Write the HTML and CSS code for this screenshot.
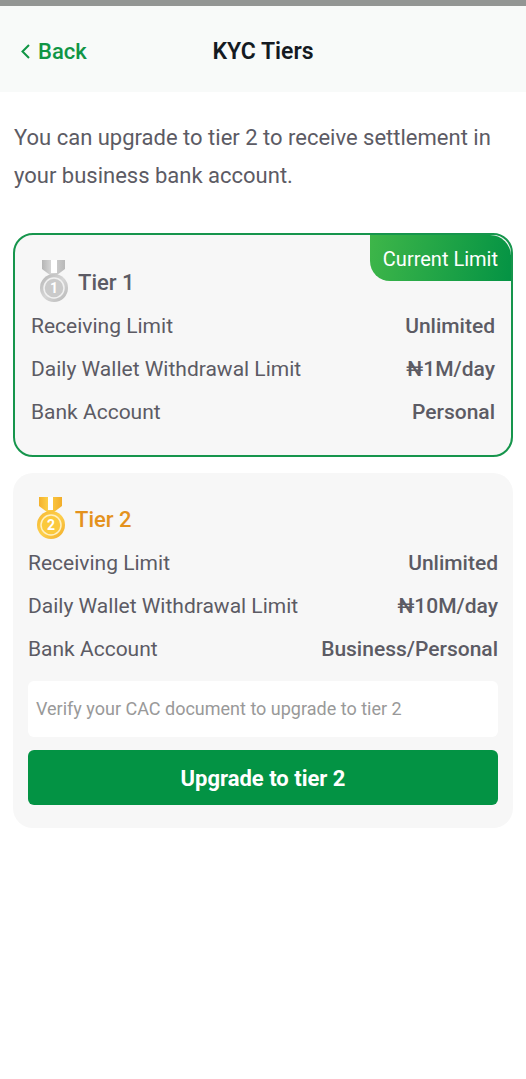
FILE: index.html
```html
<!DOCTYPE html>
<html lang="en">
<head>
<meta charset="utf-8">
<meta name="viewport" content="width=device-width, initial-scale=1">
<title>KYC Tiers</title>
<link rel="stylesheet" href="styles.css">
</head>
<body>
<header class="header">
  <a class="back" href="#">
    <svg class="back-icon" viewBox="0 0 10 16" aria-hidden="true"><path d="M9 1 2.500 7.500 9 14" fill="none" stroke="currentColor" stroke-width="2"/></svg>
    Back
  </a>
  <h1 class="page-title">KYC Tiers</h1>
</header>
<main class="content">
  <p class="intro">You can upgrade to tier 2 to receive settlement in your business bank account.</p>

  <section class="card card-current">
    <span class="badge">Current Limit</span>
    <div class="tier-head">
      <svg class="medal" viewBox="0 0 30 42" aria-hidden="true">
        <defs>
          <linearGradient id="silver" x1="0" y1="0" x2="1" y2="1"><stop offset="0" stop-color="#b4b4b4"/><stop offset=".5" stop-color="#d6d6d6"/><stop offset="1" stop-color="#b6b6b6"/></linearGradient>
          <linearGradient id="silver-ribbon"><stop offset="0" stop-color="#b5b5b5"/><stop offset=".4" stop-color="#d6d6d6"/><stop offset="1" stop-color="#b8b8b8"/></linearGradient>
        </defs>
        <path d="M3 0h23v9l-8 6h-7L3 9z" fill="url(#silver-ribbon)"/>
        <path d="M12 0h6v13h-6z" fill="#fff"/>
        <circle cx="15" cy="28" r="14" fill="url(#silver)"/>
        <circle cx="15" cy="28" r="10" fill="#cacaca" stroke="#f1f1f1" stroke-width="1.500"/>
        <text x="15" y="33" class="medal-number">1</text>
      </svg>
      <h2 class="tier-title">Tier 1</h2>
    </div>
    <dl class="limits">
      <div class="limit"><dt>Receiving Limit</dt><dd>Unlimited</dd></div>
      <div class="limit"><dt>Daily Wallet Withdrawal Limit</dt><dd>₦1M/day</dd></div>
      <div class="limit"><dt>Bank Account</dt><dd>Personal</dd></div>
    </dl>
  </section>

  <section class="card card-next">
    <div class="tier-head">
      <svg class="medal" viewBox="0 0 30 42" aria-hidden="true">
        <defs>
          <linearGradient id="gold" x1="0" y1="0" x2="1" y2="1"><stop offset="0" stop-color="#f5b730"/><stop offset=".5" stop-color="#fdcf4c"/><stop offset="1" stop-color="#f2ac28"/></linearGradient>
          <linearGradient id="gold-ribbon"><stop offset="0" stop-color="#f4b02b"/><stop offset=".4" stop-color="#fdd048"/><stop offset="1" stop-color="#f2ad2a"/></linearGradient>
        </defs>
        <path d="M3 0h23v9l-8 6h-7L3 9z" fill="url(#gold-ribbon)"/>
        <path d="M12 0h5v13h-5z" fill="#fff"/>
        <circle cx="15" cy="28" r="14" fill="url(#gold)"/>
        <circle cx="15" cy="28" r="10" fill="#fbc93c" stroke="#fff0c0" stroke-width="1.500"/>
        <text x="15" y="33" class="medal-number">2</text>
      </svg>
      <h2 class="tier-title tier-title-gold">Tier 2</h2>
    </div>
    <dl class="limits">
      <div class="limit"><dt>Receiving Limit</dt><dd>Unlimited</dd></div>
      <div class="limit"><dt>Daily Wallet Withdrawal Limit</dt><dd>₦10M/day</dd></div>
      <div class="limit"><dt>Bank Account</dt><dd>Business/Personal</dd></div>
    </dl>
    <p class="note">Verify your CAC document to upgrade to tier 2</p>
    <button class="upgrade" type="button">Upgrade to tier 2</button>
  </section>
</main>
</body>
</html>
```
FILE: styles.css
```css
* { box-sizing: border-box; }
body {
  margin: 0;
  background: #fff;
  color: #5c5b64;
  font-family: Roboto, "Noto Sans", sans-serif;
  font-size: 21px;
}
h1, h2, p, dl, dd { margin: 0; }
.header {
  display: grid;
  grid-template-columns: 1fr auto 1fr;
  align-items: center;
  padding: 28px 20px 22px;
  border-top: 6px solid #939694;
  background: #f8faf9;
  line-height: 36px;
}
.back {
  display: flex;
  align-items: center;
  gap: 8px;
  color: #109545;
  font-size: 22px;
  font-weight: 500;
  text-decoration: none;
}
.back-icon { width: 10px; height: 16px; }
.page-title { color: #141a22; font-size: 23px; font-weight: 600; }
.content { padding: 27px 13px; }
.intro { margin-bottom: 38px; padding-left: 1px; font-size: 22px; line-height: 38px; }
.card {
  position: relative;
  border-radius: 20px;
  background: #f7f7f7;
}
.card-current {
  margin-bottom: 16px;
  padding: 25px 16px 21px;
  border: 2px solid #16954c;
}
.card-next { padding: 24px 15px 23px; }
.badge {
  position: absolute;
  top: 0;
  right: 0;
  padding: 2px 13px 0;
  border-radius: 0 21px 0 20px;
  background: linear-gradient(100deg, #3eb649, #049344);
  color: #fff;
  font-size: 20px;
  line-height: 44px;
}
.tier-head {
  display: flex;
  align-items: center;
  gap: 9px;
  margin-bottom: 3px;
  padding-left: 8px;
}
.medal { width: 30px; height: 42px; }
.medal-number {
  fill: #fff;
  font-size: 14px;
  font-weight: 700;
  text-anchor: middle;
}
.tier-title { padding-top: 4px; font-size: 22px; font-weight: 500; line-height: 38px; }
.tier-title-gold { color: #e4921d; }
.limit {
  display: flex;
  justify-content: space-between;
  line-height: 43px;
}
.limit dd { font-weight: 500; }
.note {
  margin: 10px 0 13px;
  padding: 0 8px;
  border-radius: 6px;
  background: #fff;
  color: #999;
  font-size: 18px;
  line-height: 56px;
}
.upgrade {
  display: block;
  width: 100%;
  padding: 3px 0 0;
  border: 0;
  border-radius: 6px;
  background: #039344;
  color: #fff;
  font-family: inherit;
  font-size: 22px;
  font-weight: 700;
  line-height: 52px;
}
```
